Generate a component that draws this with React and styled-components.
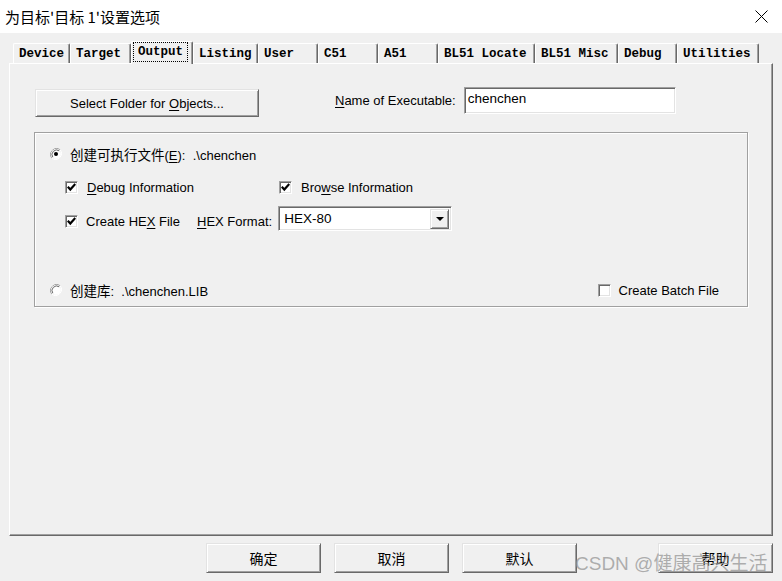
import React from "react";
import styled, { createGlobalStyle } from "styled-components";

const GlobalStyle = createGlobalStyle`
  html, body {
    margin: 0;
    padding: 0;
  }
  body {
    background: #f0f0f0;
    font-family: "Liberation Sans", "Noto Sans CJK SC", sans-serif;
    font-size: 13px;
    color: #000;
  }
`;

const Window = styled.div`
  position: relative;
  width: 782px;
  height: 581px;
  overflow: hidden;
  display: flex;
  flex-direction: column;
`;

const TitleBar = styled.div`
  height: 33px;
  background: #fff;
  display: flex;
  align-items: center;
  justify-content: space-between;
  padding: 0 14px 0 5px;
  box-sizing: border-box;
`;

const Title = styled.span`
  font-family: "Noto Sans CJK SC", sans-serif;
  font-size: 15px;
`;

const Body = styled.div`
  padding: 8px 0 0 9px;
`;

const TabStrip = styled.div`
  display: flex;
  align-items: flex-end;
  height: 22px;
  padding-left: 4px;
  position: relative;
  z-index: 1;
`;

const Tab = styled.div`
  box-sizing: border-box;
  width: ${p => p.w}px;
  height: ${p => (p.active ? 23 : 20)}px;
  margin-bottom: ${p => (p.active ? -1 : 0)}px;
  padding: ${p => (p.active ? "1px 0 0 2px" : "2px 0 0 5px")};
  border-top: 1px solid #fff;
  border-left: 1px solid #fff;
  border-right: 1px solid #696969;
  box-shadow: inset -1px 0 #a0a0a0;
  border-radius: 2px 2px 0 0;
  background: #f0f0f0;
  font-family: "Liberation Mono", monospace;
  font-size: 12.5px;
  font-weight: bold;
  line-height: 16px;
  white-space: nowrap;
`;

const Focus = styled.span`
  display: inline-block;
  outline: 1px dotted #000;
  padding: 1px 4px 1px 4px;
`;

const Page = styled.div`
  box-sizing: border-box;
  width: 764px;
  height: 473px;
  border-top: 1px solid #fff;
  border-left: 1px solid #fff;
  border-right: 1px solid #696969;
  border-bottom: 1px solid #696969;
  box-shadow: inset -1px -1px #a0a0a0;
  padding: 23px 0 0 24px;
`;

const TopRow = styled.div`
  display: flex;
  align-items: flex-start;
`;

const Button = styled.button`
  box-sizing: border-box;
  width: ${p => p.w || 115}px;
  height: ${p => p.h || 30}px;
  margin: ${p => p.m || 0};
  background: #f0f0f0;
  border: 1px solid;
  border-color: #e3e3e3 #696969 #696969 #e3e3e3;
  box-shadow: inset 1px 1px #fff, inset -1px -1px #a0a0a0;
  font-family: ${p => (p.cjk ? `"Noto Sans CJK SC", sans-serif` : `"Liberation Sans", "Noto Sans CJK SC", sans-serif`)};
  font-size: ${p => (p.cjk ? 14 : 13)}px;
  color: #000;
  padding: 0;
`;

const FieldLabel = styled.span`
  margin-left: 76px;
  line-height: 27px;
`;

const TextBox = styled.div`
  box-sizing: border-box;
  width: 212px;
  height: 27px;
  margin-left: 8px;
  background: #fff;
  border: 1px solid;
  border-color: #a0a0a0 #fff #fff #a0a0a0;
  box-shadow: inset 1px 1px #696969, inset -1px -1px #e3e3e3;
  padding: 2px 0 0 3px;
  font-size: 13.5px;
  line-height: 18px;
`;

const Group = styled.div`
  box-sizing: border-box;
  width: 714px;
  height: 175px;
  margin: 15px 0 0 0;
  border: 1px solid #a0a0a0;
  box-shadow: inset 1px 1px #fff, 1px 1px #fff;
  padding: 14px 28px 0 15px;
  display: flex;
  flex-direction: column;
`;

const Row = styled.div`
  display: flex;
  align-items: ${p => p.align || "center"};
  margin-top: ${p => p.mt || 0}px;
  height: ${p => p.h || 14}px;
`;

const Item = styled.label`
  display: flex;
  align-items: center;
  gap: ${p => p.gap || 8}px;
  width: ${p => (p.w ? `${p.w}px` : "auto")};
  margin-left: ${p => p.ml || "0"};
  margin-top: ${p => p.mt || 0}px;
  height: 14px;
  white-space: nowrap;
`;

const Cjk = styled.span`
  font-family: "Noto Sans CJK SC", sans-serif;
  font-size: 13.5px;
`;

const U = styled.span`
  text-decoration: underline;
  text-underline-offset: 2px;
`;

const Box = styled.span`
  box-sizing: border-box;
  display: inline-flex;
  align-items: center;
  justify-content: center;
  width: 13px;
  height: 13px;
  flex: none;
  background: #fff;
  border: 1px solid;
  border-color: #a0a0a0 #fff #fff #a0a0a0;
  box-shadow: inset 1px 1px #696969, inset -1px -1px #e3e3e3;
`;

const Select = styled.div`
  box-sizing: border-box;
  width: 174px;
  height: 25px;
  margin-left: 6px;
  background: #fff;
  border: 1px solid;
  border-color: #a0a0a0 #fff #fff #a0a0a0;
  box-shadow: inset 1px 1px #696969, inset -1px -1px #e3e3e3;
  display: flex;
  align-items: center;
  padding: 2px 2px 2px 5px;
  font-size: 13.5px;
`;

const SelectText = styled.span`
  flex: 1;
`;

const DropButton = styled.span`
  box-sizing: border-box;
  width: 19px;
  height: 20px;
  display: flex;
  align-items: center;
  justify-content: center;
  background: #f0f0f0;
  border: 1px solid;
  border-color: #e3e3e3 #696969 #696969 #e3e3e3;
  box-shadow: inset 1px 1px #fff, inset -1px -1px #a0a0a0;
`;

const Footer = styled.div`
  display: flex;
  gap: 13px;
  padding: 7px 0 0 197px;
`;

const Watermark = styled.div`
  position: absolute;
  left: 575px;
  top: 548px;
  font-family: "Liberation Sans", "Noto Sans CJK SC", sans-serif;
  font-size: 19px;
  color: rgba(150, 150, 150, 0.75);
  white-space: nowrap;
  pointer-events: none;
`;

const Check = ({ on }) => (
  <Box>
    {on && (
      <svg width="9" height="9" viewBox="0 0 9 9">
        <path d="M0.8 3.8 L3.3 6.6 L8.3 1" fill="none" stroke="#000" strokeWidth="2.2" />
      </svg>
    )}
  </Box>
);

const Radio = ({ on }) => (
  <svg width="12" height="12" viewBox="0 0 12 12" style={{ flex: "none" }}>
    <path d="M10.2 1.8 A6 6 0 0 0 1.8 10.2" fill="none" stroke="#a0a0a0" />
    <path d="M1.8 10.2 A6 6 0 0 0 10.2 1.8" fill="none" stroke="#fff" />
    <circle cx="6" cy="6" r="4.8" fill="#fff" />
    <path d="M9.2 2.8 A4.6 4.6 0 0 0 2.8 9.2" fill="none" stroke="#696969" />
    {on && <circle cx="6" cy="6" r="2" fill="#000" />}
  </svg>
);

const tabs = [
  ["Device", 57],
  ["Target", 61],
  ["Output", 62],
  ["Listing", 65],
  ["User", 60],
  ["C51", 60],
  ["A51", 60],
  ["BL51 Locate", 97],
  ["BL51 Misc", 83],
  ["Debug", 59],
  ["Utilities", 82],
];

export default function App() {
  return (
    <>
      <GlobalStyle />
      <Window>
        <TitleBar>
          <Title>为目标'目标 1'设置选项</Title>
          <svg width="13" height="13" viewBox="0 0 13 13">
            <path d="M0.5 0.5 L12.5 12.5 M12.5 0.5 L0.5 12.5" stroke="#000" strokeWidth="1" />
          </svg>
        </TitleBar>
        <Body>
          <TabStrip>
            {tabs.map(([name, w]) => (
              <Tab key={name} w={w} active={name === "Output"}>
                {name === "Output" ? <Focus>{name}</Focus> : name}
              </Tab>
            ))}
          </TabStrip>
          <Page>
            <TopRow>
              <Button w={224} h={28} m="2px 0 0 1px">
                Select Folder for <U>O</U>bjects...
              </Button>
              <FieldLabel>
                <U>N</U>ame of Executable:
              </FieldLabel>
              <TextBox>chenchen</TextBox>
            </TopRow>
            <Group>
              <Row>
                <Item>
                  <Radio on />
                  <span>
                    <Cjk>创建可执行文件</Cjk>(<U>E</U>):&nbsp; .\chenchen
                  </span>
                </Item>
              </Row>
              <Row mt={19}>
                <Item w={214} ml="15px" gap={9}>
                  <Check on />
                  <span>
                    <U>D</U>ebug Information
                  </span>
                </Item>
                <Item gap={9}>
                  <Check on />
                  <span>
                    Bro<U>w</U>se Information
                  </span>
                </Item>
              </Row>
              <Row mt={12} h={25} align="flex-start">
                <Item w={132} ml="15px" mt={8}>
                  <Check on />
                  <span>
                    Create HE<U>X</U> File
                  </span>
                </Item>
                <Item mt={8}>
                  <span>
                    <U>H</U>EX Format:
                  </span>
                </Item>
                <Select>
                  <SelectText>HEX-80</SelectText>
                  <DropButton>
                    <svg width="8" height="4" viewBox="0 0 8 4">
                      <path d="M0 0 L8 0 L4 4 Z" fill="#000" />
                    </svg>
                  </DropButton>
                </Select>
              </Row>
              <Row mt={52}>
                <Item>
                  <Radio />
                  <span>
                    <Cjk>创建库</Cjk>:&nbsp; .\chenchen.LIB
                  </span>
                </Item>
                <Item ml="auto">
                  <Check />
                  <span>Create Batch File</span>
                </Item>
              </Row>
            </Group>
          </Page>
          <Footer>
            <Button cjk>确定</Button>
            <Button cjk>取消</Button>
            <Button cjk>默认</Button>
            <Button cjk m="0 0 0 68px">帮助</Button>
          </Footer>
        </Body>
        <Watermark>CSDN @健康高兴生活</Watermark>
      </Window>
    </>
  );
}
